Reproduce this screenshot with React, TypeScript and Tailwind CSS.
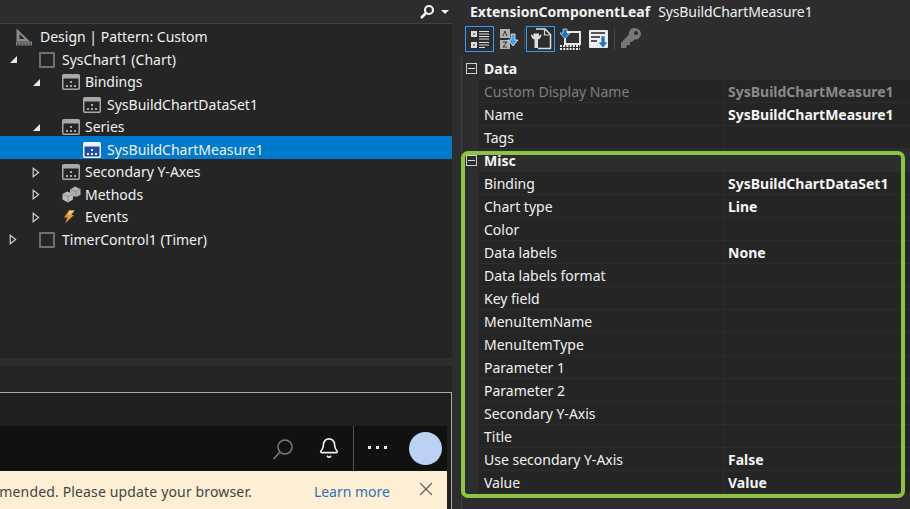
import React from "react";
import { Bell, X } from "lucide-react";

const FONT = "font-['Noto_Sans','Open_Sans',sans-serif]";

function Expand({ open }: { open: boolean }) {
  return open ? (
    <svg width="9" height="9" viewBox="0 0 9 9" className="block"><path d="M8 1V8H1Z" fill="#e8e8e8" /></svg>
  ) : (
    <svg width="8" height="11" viewBox="0 0 8 11" className="block"><path d="M1.2 1.2L6.6 5.5L1.2 9.8Z" fill="none" stroke="#d0d0d0" strokeWidth="1.2" /></svg>
  );
}

function Check() {
  return <span className="block w-[16px] h-[16px] border-2 border-[#707070] bg-[#252526] rounded-[1px]" />;
}

function Win({ selected }: { selected?: boolean }) {
  const c = selected ? "#f0f4fa" : "#a8a8a8";
  const bg = selected ? "#1f4fa8" : "#252526";
  return (
    <svg width="18" height="16" viewBox="0 0 18 16" className="block">
      <rect x="0.75" y="0.75" width="16.5" height="14.5" rx="1" fill={bg} stroke={c} strokeWidth="1.5" />
      <rect x="1" y="1" width="16" height="3.5" fill={c} />
      <rect x="8" y="7" width="2" height="2" fill={c} />
      <rect x="4" y="11" width="2" height="2" fill={c} />
      <rect x="8" y="11" width="2" height="2" fill={c} />
      <rect x="12" y="11" width="2" height="2" fill={c} />
    </svg>
  );
}

function Design() {
  return (
    <svg width="18" height="18" viewBox="0 0 18 18" className="block">
      <path d="M1.5 0.5V13.5H15ZM4.5 6V11H9.5Z" fill="#8a8a8a" fillRule="evenodd" />
      <rect x="1" y="13.5" width="16" height="4" fill="#7c7c7c" />
      <path d="M3 14.5V17.5M6 14.5V17.5M9 14.5V17.5M12 14.5V17.5M15 14.5V17.5" stroke="#2a2a2a" strokeWidth="0.8" />
    </svg>
  );
}

function Cubes() {
  return (
    <svg width="19" height="17" viewBox="0 0 19 17" className="block">
      <path d="M8 3.5L13 0.5L18.5 3V9L14 11L8 9Z" fill="#b0b0b0" />
      <path d="M8 3.5L14 5.5V11M14 5.5L18.5 3" stroke="#7a7a7a" fill="none" strokeWidth="0.7" />
      <path d="M0.5 8L5 5.5L11 8V13.5L6 16.5L0.5 13.5Z" fill="#bcbcbc" />
      <path d="M0.5 8L6 10.5V16.5M6 10.5L11 8" stroke="#7c7c7c" fill="none" strokeWidth="0.7" />
    </svg>
  );
}

function Bolt() {
  return (
    <svg width="12" height="14" viewBox="0 0 12 14" className="block ml-[1px]">
      <path d="M6 0.5H11.5L8 5H11L2 13.5L4.5 7.5H1Z" fill="#e0993a" />
      <path d="M6 0.5H11.5L8 5H5Z" fill="#f0c070" />
    </svg>
  );
}

type TreeItem = { label: string; indent: number; exp?: boolean; icon: React.ReactNode; selected?: boolean };

const tree: TreeItem[] = [
  { label: "SysChart1 (Chart)", indent: 9, exp: true, icon: <Check /> },
  { label: "Bindings", indent: 32, exp: true, icon: <Win /> },
  { label: "SysBuildChartDataSet1", indent: 55, icon: <Win /> },
  { label: "Series", indent: 32, exp: true, icon: <Win /> },
  { label: "SysBuildChartMeasure1", indent: 55, icon: <Win selected />, selected: true },
  { label: "Secondary Y-Axes", indent: 32, exp: false, icon: <Win /> },
  { label: "Methods", indent: 32, exp: false, icon: <Cubes /> },
  { label: "Events", indent: 32, exp: false, icon: <Bolt /> },
  { label: "TimerControl1 (Timer)", indent: 9, exp: false, icon: <Check /> },
];

function TreeRow({ item }: { item: TreeItem }) {
  return (
    <div className={`flex items-center h-[22.5px] pt-[5px] ${item.selected ? "bg-[#007acc]" : ""}`} style={{ paddingLeft: item.indent }}>
      <span className="w-[30px] flex items-center shrink-0">
        {item.exp !== undefined && <Expand open={item.exp} />}
      </span>
      <span className={`w-[23px] flex items-center shrink-0 ${item.exp === undefined ? "-ml-[2px] mr-[1px]" : ""}`}>{item.icon}</span>
      <span className="text-[#f1f1f1] whitespace-nowrap">{item.label}</span>
    </div>
  );
}

function PropRow({ name, value, muted }: { name: string; value?: string; muted?: boolean }) {
  return (
    <div className="flex h-[23px] pl-[17px] bg-[#2d2d30]">
      <div className={`w-[245px] shrink-0 pl-[5px] pt-[2px] flex items-center bg-[#252526] border-b border-[#2d2d30] border-r whitespace-nowrap ${muted ? "text-[#7f7f80]" : "text-[#f1f1f1]"}`}>
        {name}
      </div>
      <div className={`flex-1 pl-[4px] pt-[2px] flex items-center bg-[#252526] border-b border-[#2d2d30] font-bold whitespace-nowrap ${muted ? "text-[#8a8a8b]" : "text-[#f4f4f4]"}`}>
        {value}
      </div>
    </div>
  );
}

function SectionHead({ name }: { name: string }) {
  return (
    <div className="flex items-center h-[23px] bg-[#2d2d30] pl-[4px]">
      <span className="w-[11px] h-[11px] border border-[#d0d0d0] flex items-center justify-center mr-[7px]">
        <span className="block w-[7px] h-px bg-[#e0e0e0]" />
      </span>
      <span className="font-bold text-[#f4f4f4]">{name}</span>
    </div>
  );
}

function ToolBtn({ active, children }: { active?: boolean; children: React.ReactNode }) {
  return (
    <span className={`w-[29px] h-[26px] flex items-center justify-center border ${active ? "border-[#3399ff]" : "border-transparent"}`}>{children}</span>
  );
}

function IcoCategorized() {
  return (
    <svg width="20" height="19" viewBox="0 0 20 19">
      <rect x="1" y="1" width="6" height="6" fill="#ddd" /><rect x="3" y="3.5" width="2" height="1" fill="#222" />
      <rect x="1" y="12" width="6" height="6" fill="#ddd" /><rect x="3" y="14.5" width="2" height="1" fill="#222" />
      <path d="M9 1.5H19M9 4H19M9 6.5H19M9 9H19M9 12.5H19M9 15H19M9 17.5H15" stroke="#ddd" strokeWidth="1" />
    </svg>
  );
}
function IcoSort() {
  return (
    <svg width="22" height="22" viewBox="0 0 22 22">
      <rect x="2" y="1" width="10" height="9" fill="#b0b0b0" /><path d="M5 8L7 3L9 8" stroke="#333" fill="none" />
      <rect x="2" y="12" width="10" height="9" fill="#b0b0b0" /><path d="M5 14H9L5 19H9" stroke="#333" fill="none" />
      <path d="M13 6H17V12H20L15 18L10 12H13Z" fill="#4a9de0" stroke="#eee" strokeWidth="0.8" />
    </svg>
  );
}
function IcoPage() {
  return (
    <svg width="22" height="22" viewBox="0 0 22 22">
      <path d="M6 1H15L20.5 6.5V20.5H8" fill="none" stroke="#ddd" strokeWidth="1.5" />
      <path d="M14.5 1V7H20.5" fill="none" stroke="#ddd" strokeWidth="1.2" />
      <path d="M1 6C1 9.5 2.8 11 4.5 11.5V20H8V11.5C9.7 11 11.5 9.5 11.5 6L9 8V5.5H3.5V8Z" fill="#ddd" />
    </svg>
  );
}
function IcoEvents() {
  return (
    <svg width="22" height="23" viewBox="0 0 22 23">
      <rect x="6" y="4" width="15" height="12" fill="#333" stroke="#e8e8e8" strokeWidth="2" />
      <path d="M1 18H21M1 21H21" stroke="#e8e8e8" strokeWidth="2" strokeDasharray="2 1.2" />
      <path d="M4 1H8V5H11L6 11L1 5H4Z" fill="#1c75c7" stroke="#fff" strokeWidth="0.6" />
    </svg>
  );
}
function IcoList() {
  return (
    <svg width="22" height="22" viewBox="0 0 22 22">
      <rect x="1" y="2" width="19" height="18" rx="1" fill="#eee" />
      <path d="M3 5H17M3 9H12M3 13H9" stroke="#222" strokeWidth="1.6" />
      <path d="M13 8H17V14H20L15 20L10 14H13Z" fill="#1c75c7" stroke="#fff" strokeWidth="0.6" />
    </svg>
  );
}
function IcoKey() {
  return (
    <svg width="22" height="24" viewBox="0 0 22 24">
      <path d="M14 1C10.5 1 8.5 4 9 7.5L1 16V21H6L7 18H10V15H12L14.5 12.5C18.5 13 21 10 21 7C21 3.5 18 1 14 1ZM16 4A2 2 0 1 1 16 8A2 2 0 0 1 16 4Z" fill="#777" fillRule="evenodd" />
    </svg>
  );
}

const misc: [string, string?][] = [
  ["Binding", "SysBuildChartDataSet1"],
  ["Chart type", "Line"],
  ["Color"],
  ["Data labels", "None"],
  ["Data labels format"],
  ["Key field"],
  ["MenuItemName"],
  ["MenuItemType"],
  ["Parameter 1"],
  ["Parameter 2"],
  ["Secondary Y-Axis"],
  ["Title"],
  ["Use secondary Y-Axis", "False"],
  ["Value", "Value"],
];

export default function App() {
  return (
    <div className={`w-[910px] h-[509px] overflow-hidden flex bg-[#2d2d30] text-[14px] leading-none ${FONT}`}>
      <div className="w-[452px] shrink-0 flex flex-col bg-[#252526]">
        <div className="h-[24px] shrink-0 bg-[#2d2d30] border-b border-[#3f3f46] flex items-center justify-end pr-[3px] gap-[6px]">
          <svg width="16" height="16" viewBox="0 0 16 16"><circle cx="10" cy="6" r="4" fill="none" stroke="#f1f1f1" strokeWidth="2.2" /><path d="M7 9L2 14" stroke="#f1f1f1" strokeWidth="2.6" /></svg>
          <svg width="8" height="4" viewBox="0 0 8 4"><path d="M0 0H8L4 4Z" fill="#f1f1f1" /></svg>
        </div>
        <div className="flex items-center h-[22px] pt-[3px] pl-[15px]">
          <span className="w-[25px] shrink-0"><Design /></span>
          <span className="text-[#f1f1f1]">Design | Pattern: Custom</span>
        </div>
        {tree.map((t) => (
          <TreeRow key={t.label} item={t} />
        ))}
        <div className="flex-1" />
        <div className="h-[8px] bg-[#2d2d30] shrink-0" />
        <div className="h-[26px] shrink-0" />
        <div className="border-t border-r border-[#a8a8a8] h-[117px] shrink-0 flex flex-col pr-[4px] bg-[#1f1f1f]">
          <div className="h-[33px] shrink-0" />
          <div className="h-[45px] shrink-0 bg-[#111111] flex items-center justify-end">
            <svg width="22" height="22" viewBox="0 0 22 22" className="mr-[24px] mt-[1px]">
              <circle cx="13" cy="9" r="7" fill="none" stroke="#7d7d7d" strokeWidth="1.5" />
              <path d="M8 14L1.5 21" stroke="#7d7d7d" strokeWidth="1.6" />
            </svg>
            <Bell size={22} strokeWidth={1.8} className="text-[#f0f0f0] mr-[13px] -mt-[2px]" />
            <span className="w-px h-[45px] bg-[#555]" />
            <span className="flex items-center gap-[5px] ml-[14px] mr-[22px] -mt-[2px]">
              <span className="w-[3px] h-[3px] bg-[#e8e8e8]" />
              <span className="w-[3px] h-[3px] bg-[#e8e8e8]" />
              <span className="w-[3px] h-[3px] bg-[#e8e8e8]" />
            </span>
            <span className="w-[33px] h-[33px] rounded-full bg-[#bcd2f5] mr-[5px]" />
          </div>
          <div className="flex-1 bg-[#fdefd3] flex items-center justify-end relative text-[#444] pt-[4px]">
            <span className="absolute right-[195px] whitespace-nowrap tracking-[0.15px]">mended. Please update your browser.</span>
            <span className="text-[#2f6fb8] mr-[57px]">Learn more</span>
            <X size={22} strokeWidth={1.3} className="text-[#5f5f5f] absolute right-[10px] top-[7px]" />
          </div>
        </div>
      </div>
      <div className="w-[5px] shrink-0 bg-[#2d2d30]" />
      <div className="flex-1 flex flex-col">
        <div className="h-[24px] shrink-0 flex items-center pl-[13px] whitespace-nowrap">
          <span className="font-bold text-[#f1f1f1]">ExtensionComponentLeaf</span>
          <span className="ml-[8px] text-[#f1f1f1] tracking-[-0.1px]">SysBuildChartMeasure1</span>
        </div>
        <div className="h-[30px] shrink-0 flex items-center pl-[8px]">
          <ToolBtn active><IcoCategorized /></ToolBtn>
          <ToolBtn><IcoSort /></ToolBtn>
          <span className="w-px h-[22px] bg-[#46464a] mx-[1px]" />
          <ToolBtn active><IcoPage /></ToolBtn>
          <ToolBtn><IcoEvents /></ToolBtn>
          <ToolBtn><IcoList /></ToolBtn>
          <span className="w-px h-[22px] bg-[#46464a] mx-[1px]" />
          <ToolBtn><IcoKey /></ToolBtn>
        </div>
        <div className="h-[3px] shrink-0" />
        <div className="flex-1 ml-[4px] border-l border-[#3f3f46]">
          <SectionHead name="Data" />
          <PropRow name="Custom Display Name" value="SysBuildChartMeasure1" muted />
          <PropRow name="Name" value="SysBuildChartMeasure1" />
          <PropRow name="Tags" />
          <div className="relative">
            <SectionHead name="Misc" />
            {misc.map(([n, v]) => (
              <PropRow key={n} name={n} value={v} />
            ))}
            <div className="absolute left-[-1px] w-[444px] top-[2px] h-[347px] border-[4px] border-[#8bc53f] rounded-[7px] pointer-events-none" />
          </div>
        </div>
      </div>
    </div>
  );
}
